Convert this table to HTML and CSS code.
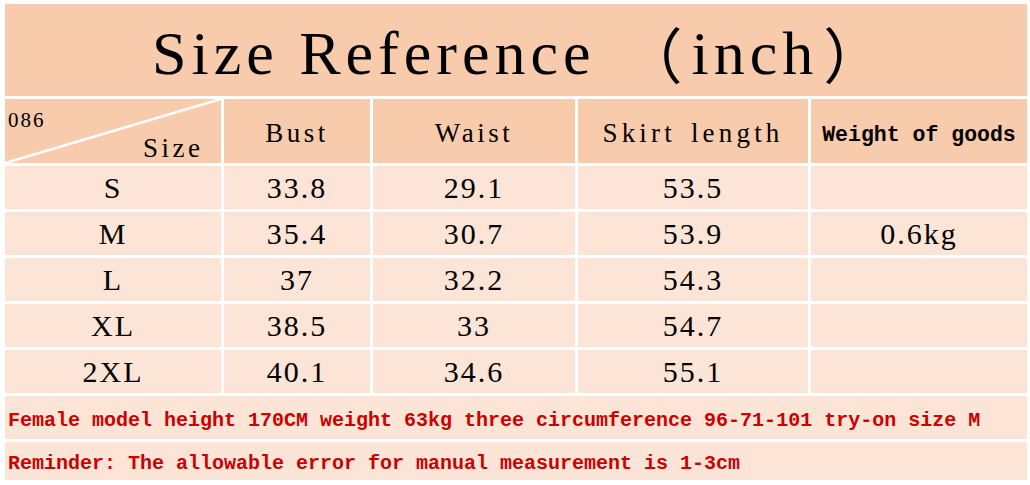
FILE: index.html
```html
<!DOCTYPE html>
<html>
<head>
<meta charset="utf-8">
<link rel="stylesheet" href="styles.css">
</head>
<body>
<div class="sheet">
  <div class="cell title span">Size Reference <span class="fw open">（</span>inch<span class="fw close">）</span></div>

  <div class="cell head corner">
    <svg class="diag" viewBox="0 0 216 64" preserveAspectRatio="none"><line x1="0" y1="64" x2="216" y2="0" stroke="#fff" stroke-width="2.6"/></svg>
    <span class="code">086</span>
    <span class="corner-size">Size</span>
  </div>
  <div class="cell head">Bust</div>
  <div class="cell head">Waist</div>
  <div class="cell head wide">Skirt length</div>
  <div class="cell head mono">Weight of goods</div>

  <div class="cell data">S</div><div class="cell data">33.8</div><div class="cell data">29.1</div><div class="cell data">53.5</div><div class="cell data"></div>
  <div class="cell data">M</div><div class="cell data">35.4</div><div class="cell data">30.7</div><div class="cell data">53.9</div><div class="cell data">0.6kg</div>
  <div class="cell data">L</div><div class="cell data">37</div><div class="cell data">32.2</div><div class="cell data">54.3</div><div class="cell data"></div>
  <div class="cell data">XL</div><div class="cell data">38.5</div><div class="cell data">33</div><div class="cell data">54.7</div><div class="cell data"></div>
  <div class="cell data">2XL</div><div class="cell data">40.1</div><div class="cell data">34.6</div><div class="cell data">55.1</div><div class="cell data"></div>

  <div class="cell note span">Female model height 170CM weight 63kg three circumference 96-71-101 try-on size M</div>
  <div class="cell note span last">Reminder: The allowable error for manual measurement is 1-3cm</div>
</div>
</body>
</html>
```

FILE: styles.css
```css
html, body {
  margin: 0;
  padding: 0;
  background: #ffffff;
}

body {
  width: 1030px;
  height: 485px;
  overflow: hidden;
  font-family: "Liberation Serif", "Times New Roman", serif;
  color: #000;
}

.sheet {
  margin: 4px 0 0 5px;
  width: 1022px;
  display: grid;
  grid-template-columns: 216px 146px 202px 230px 216px;
  grid-template-rows: 92px 64px 43px 43px 43px 43px 43px 43px 38px;
  gap: 3px;
  background: #ffffff;
}

.cell {
  display: flex;
  align-items: center;
  justify-content: center;
  white-space: nowrap;
  overflow: hidden;
}

.span {
  grid-column: 1 / -1;
}

.title {
  background: #f8cbad;
  font-size: 62px;
  line-height: 70px;
  letter-spacing: 5px;
  justify-content: flex-start;
  padding-left: 147px;
  padding-top: 6px;
  box-sizing: border-box;
}

.fw {
  font-family: "Noto Sans CJK SC", "Noto Sans CJK JP", sans-serif;
  font-weight: 400;
  letter-spacing: 0;
  font-size: 60px;
  line-height: 70px;
}

.fw.open {
  margin-left: 27px;
  margin-right: 9px;
}

.fw.close {
  margin-left: 5px;
}

.head {
  background: #f8cbad;
  font-size: 27px;
  letter-spacing: 3.5px;
  padding-top: 4px;
  box-sizing: border-box;
}

.head.wide {
  letter-spacing: 4.2px;
  word-spacing: 4px;
}

.head.mono {
  font-family: "Liberation Mono", "Courier New", monospace;
  font-weight: bold;
  font-size: 21.5px;
  letter-spacing: 0;
  padding-top: 7px;
}

.corner {
  position: relative;
  display: block;
  padding: 0;
}

.diag {
  position: absolute;
  inset: 0;
  width: 100%;
  height: 100%;
}

.code {
  position: absolute;
  left: 3px;
  top: 9px;
  font-size: 21px;
  letter-spacing: 2px;
}

.corner-size {
  position: absolute;
  left: 138px;
  top: 34px;
  font-size: 27px;
  letter-spacing: 3.5px;
}

.data {
  background: #fce4d6;
  font-size: 30px;
  letter-spacing: 2px;
}

.note {
  background: #fce4d6;
  justify-content: flex-start;
  padding-left: 3px;
  padding-top: 5px;
  box-sizing: border-box;
  font-family: "Liberation Mono", "Courier New", monospace;
  font-weight: bold;
  font-size: 20px;
  color: #cc0000;
}

.note.last {
  padding-top: 4px;
}
```
